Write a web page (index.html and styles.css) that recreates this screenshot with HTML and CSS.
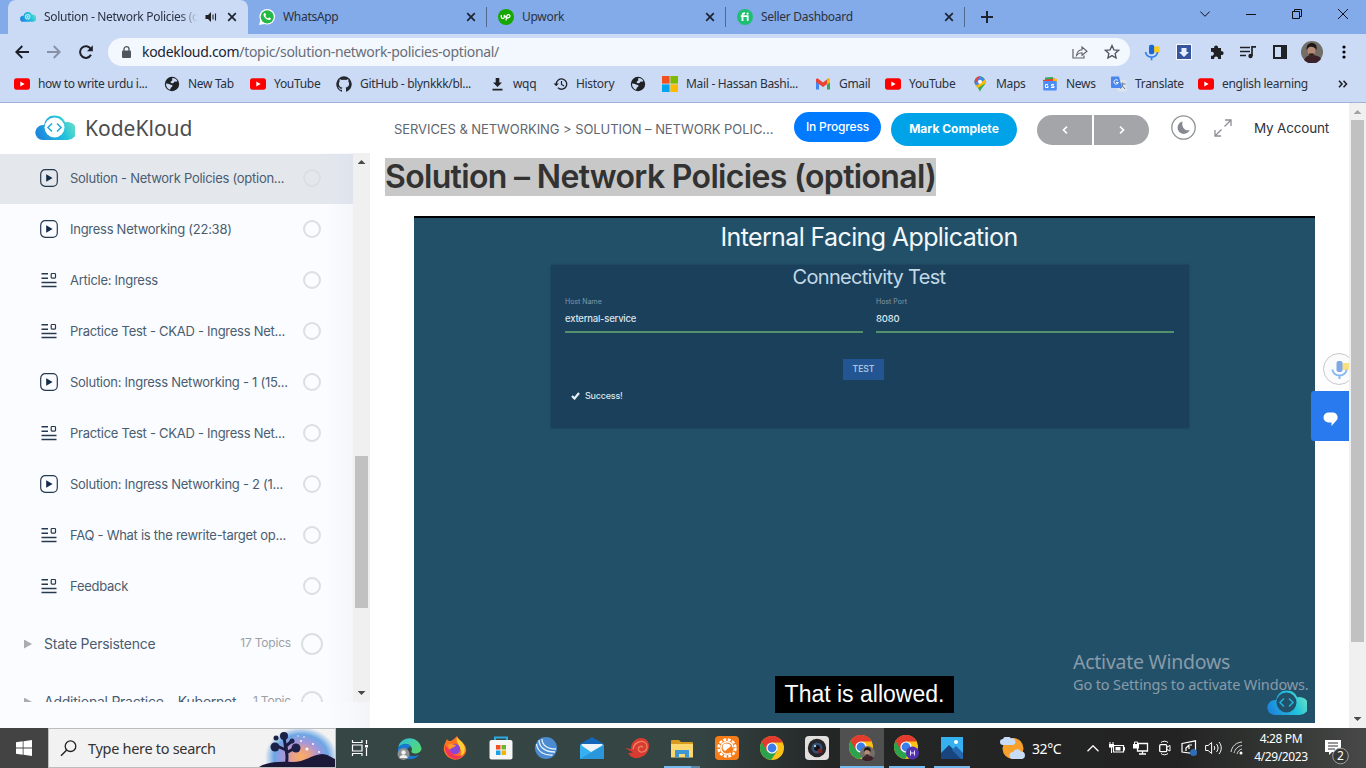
FILE: index.html
```html
<!DOCTYPE html>
<html lang="en">
<head>
<meta charset="utf-8">
<title>Solution - Network Policies (optional)</title>
<link rel="stylesheet" href="styles.css">
</head>
<body>
<svg class="defs" width="0" height="0">
  <defs>
    <linearGradient id="kk" x1="0" y1=".6" x2="1" y2=".3"><stop offset="0" stop-color="#1d86dc"/><stop offset=".6" stop-color="#22c3dc"/><stop offset="1" stop-color="#6fe3c4"/></linearGradient>
    <linearGradient id="edge" x1="0" y1="0" x2="1" y2="1"><stop offset="0" stop-color="#2bb7e8"/><stop offset=".45" stop-color="#45d0a0"/><stop offset="1" stop-color="#5bd86a"/></linearGradient>
    <symbol id="i-close" viewBox="0 0 10 10"><path d="M1.2 1.2l7.6 7.6M8.8 1.2L1.2 8.8" stroke="#1d2430" stroke-width="1.7"/></symbol>
    <symbol id="i-yt" viewBox="0 0 16 16"><rect y="2.3" width="16" height="11.4" rx="2.6" fill="#f00"/><path d="M6.3 5.6v4.8L10.6 8z" fill="#fff"/></symbol>
    <symbol id="i-globe" viewBox="0 0 16 16"><circle cx="8" cy="8" r="7.200" fill="#202124"/><path d="M2 7.500c1.500 0 3 .3 4.200 1 .8.500 2.300.3 2.300 1.500 0 1-1.500 1-1.800 2-.2.700-.2 1.500-1 1.700C3.300 12.700 1.800 10 2 7.500zM8.500 2.100c2.300 0 4 1.300 4.900 3-.8.800-1.600.6-2.400.5-1-.1-.8 1.600-2 1.600-1.300 0-2.500-.2-2.400-1.300.100-1 1.600-.7 1.700-1.700 0-.8-.5-1.500.2-2.100z" fill="#cbdbf5"/></symbol>
    <symbol id="i-chrome" viewBox="0 0 24 24"><circle cx="12" cy="12" r="12" fill="#fbc116"/><path d="M12 12L1.600 6A12 12 0 0 0 11 23.950L17.200 15z" fill="#2ba24c"/><path d="M12 12V6.500h10.700A12 12 0 0 0 1.600 6l5.200 9z" fill="#e33b2e"/><circle cx="12" cy="12" r="5.600" fill="#fff"/><circle cx="12" cy="12" r="4.400" fill="#3b7de9"/></symbol>
    <symbol id="i-kk" viewBox="0 0 40 25"><path d="M8 24.500a7.500 7.500 0 1 1 1-14.900 11 11 0 0 1 21.200-2.800A9 9 0 1 1 32 24.500z" fill="url(#kk)"/></symbol>
    <symbol id="i-play" viewBox="0 0 18 18"><rect x=".7" y=".7" width="16.600" height="16.600" rx="4.500" fill="none" stroke="#26394f" stroke-width="1.200"/><path d="M6.200 5.200v7.600L12.600 9z" fill="#142c47"/></symbol>
    <symbol id="i-article" viewBox="0 0 16 16"><path d="M.5 1.800H7M.5 6.200H7M.5 10.500h15M.5 14.500h15" stroke="#26394f" stroke-width="1.400"/><rect x="10.200" y="1.500" width="4.300" height="4.600" rx=".8" fill="none" stroke="#26394f" stroke-width="1.200"/></symbol>
    <symbol id="i-mic" viewBox="0 0 18 20"><rect x="11" y="3" width="7" height="7" rx="1" fill="#fbcb1e"/><rect x="5.500" y="1" width="6" height="11" rx="2" fill="#1a66d6"/><path d="M1.500 9.500a7 6 0 0 0 14 0M8.500 15v4" fill="none" stroke="#2f83ea" stroke-width="2"/></symbol>
    <symbol id="i-face" viewBox="0 0 22 22"><circle cx="11" cy="11" r="11" fill="#746e69"/><path d="M3 19c2-4 5-5 8-5s8 1 9 4a11 11 0 0 1-17 1z" fill="#3b2229"/><ellipse cx="10.500" cy="10" rx="3.800" ry="5.500" fill="#b58b75"/><path d="M5.500 9c0-5 2-7 5.500-7s5.500 3 4.500 7c-2-4-7-4-8.500-2z" fill="#1c1718"/><path d="M7.500 13c2-1 4-1 6 0-1 4-5 4-6 0z" fill="#33241f"/></symbol>
  </defs>
</svg>

<div class="screen">
  <header class="browser">
    <div class="tabstrip">
      <div class="tab tab-active">
        <svg class="i16" viewBox="0 0 40 25"><use href="#i-kk"/><circle cx="19" cy="12" r="7" fill="#bfeaf5"/><circle cx="19" cy="12" r="3.500" fill="none" stroke="#22b3e0" stroke-width="2"/></svg>
        <span class="tab-title fade">Solution - Network Policies (o</span>
        <svg class="sound" width="12" height="12" viewBox="0 0 12 12"><path d="M.5 4v4h2.500l3 3V1L3 4z" fill="#202124"/><path d="M8 3.500v5M10.500 2.500v7" stroke="#202124" stroke-width="1.100"/></svg>
        <svg class="x" width="10" height="10"><use href="#i-close"/></svg>
      </div>
      <div class="tab">
        <svg class="i16" viewBox="0 0 16 16"><circle cx="8.200" cy="7.800" r="7.800" fill="#fff"/><path d="M0 16l1.500-5 4 4z" fill="#fff"/><circle cx="8.200" cy="7.800" r="6.600" fill="#25b846"/><path d="M5 4.300c1-1 1.700.3 2 1.300L6.400 7c.6 1.200 1.400 1.900 2.600 2.500l1.200-1c1.200.4 2.300 1 1.300 2-2.600 2.200-8.700-3-6.500-6.200z" fill="#fff"/></svg>
        <span class="tab-title">WhatsApp</span>
        <svg class="x" width="10" height="10"><use href="#i-close"/></svg>
      </div>
      <div class="tab divided">
        <svg class="i16" viewBox="0 0 16 16"><circle cx="8" cy="8" r="8" fill="#14a800"/><path d="M3.300 6v2c0 2 3 2 3 0V6c.8 1.500 1.500 3 3 3s2.700-.8 2.700-2-2.500-2.500-3.200 0L8 11.500" fill="none" stroke="#fff" stroke-width="1.300"/></svg>
        <span class="tab-title">Upwork</span>
        <svg class="x" width="10" height="10"><use href="#i-close"/></svg>
      </div>
      <div class="tab divided">
        <svg class="i16" viewBox="0 0 16 16"><circle cx="8" cy="8" r="8" fill="#1dbf73"/><path d="M5.500 12V6c0-1.500 1-1.900 2.500-1.700M3.800 7.200h6.900V12" fill="none" stroke="#fff" stroke-width="1.800"/><circle cx="10.600" cy="4.600" r="1.100" fill="#fff"/></svg>
        <span class="tab-title">Seller Dashboard</span>
        <svg class="x" width="10" height="10"><use href="#i-close"/></svg>
      </div>
      <div class="newtab divided"><svg width="14" height="14" viewBox="0 0 14 14"><path d="M7 1v12M1 7h12" stroke="#1d2430" stroke-width="2"/></svg></div>
      <div class="wincontrols">
        <svg width="10" height="10" viewBox="0 0 10 10"><path d="M.3 2.500L5 7.300l4.700-4.800" fill="none" stroke="#111" stroke-width="1"/></svg>
        <svg width="10" height="10" viewBox="0 0 10 10"><path d="M0 5.500h10" stroke="#111"/></svg>
        <svg width="10" height="10" viewBox="0 0 10 10"><path d="M.5 2.500h7v7h-7zM2.500 2.500v-2h7v7h-2" fill="none" stroke="#111"/></svg>
        <svg width="10" height="10" viewBox="0 0 10 10"><path d="M0 0l10 10M10 0L0 10" stroke="#111"/></svg>
      </div>
    </div>

    <div class="toolbar">
      <svg width="14" height="14" viewBox="0 0 14 14"><path d="M14 7H1.500M7.300 1L1.300 7l6 6" fill="none" stroke="#1d2027" stroke-width="1.900"/></svg>
      <svg width="14" height="14" viewBox="0 0 14 14"><path d="M0 7h12.500M6.700 1l6 6-6 6" fill="none" stroke="#8691a6" stroke-width="1.900"/></svg>
      <svg width="14" height="14" viewBox="0 0 14 14"><path d="M12 9.800A5.800 5.800 0 1 1 11.800 4" fill="none" stroke="#1d2027" stroke-width="2"/><path d="M13.800.3v6H8z" fill="#1d2027"/></svg>
      <div class="omnibox">
        <svg width="9" height="12" viewBox="0 0 9 12"><rect y="4.500" width="9" height="7.500" rx="1" fill="#50555c"/><path d="M2 5V3a2.500 2.300 0 0 1 5 0v2" fill="none" stroke="#50555c" stroke-width="1.300"/></svg>
        <span class="url"><b>kodekloud.com</b>/topic/solution-network-policies-optional/</span>
        <svg width="16" height="14" viewBox="0 0 16 14"><path d="M1 4v9h11v-2.500" fill="none" stroke="#5f6368" stroke-width="1.200"/><path d="M4.500 10.500C5 6.500 7.500 5 10 4.800V2l5 4.300-5 4V7.800c-2.500 0-4 .8-5.500 2.700z" fill="none" stroke="#5f6368" stroke-width="1.100"/></svg>
        <svg width="16" height="16" viewBox="0 0 16 16"><path d="M8 1.500l1.900 4.300 4.700.5-3.500 3.100 1 4.600L8 11.600 3.900 14l1-4.600L1.400 6.300l4.700-.5z" fill="none" stroke="#50555c" stroke-width="1.300"/></svg>
      </div>
      <svg width="16" height="17"><use href="#i-mic"/></svg>
      <svg width="16" height="16" viewBox="0 0 16 16"><rect width="16" height="16" fill="#f6f9ff"/><rect x="1" y="1" width="14" height="14" fill="#37559c"/><path d="M5.500 4h5v4H13l-5 5-5-5h2.500z" fill="#e6efff"/></svg>
      <svg width="16" height="16" viewBox="0 0 16 16"><path d="M2 4h3.200a2 2 0 1 1 3.800 0h3v3.200a2 2 0 1 1 0 3.800V15H9a2 2 0 1 0-3.800 0H2v-3.500a2 2 0 1 0 0-3.600z" fill="#202124"/></svg>
      <svg width="16" height="16" viewBox="0 0 16 16"><path d="M0 3.500h10M0 7.500h10M0 11.500h6" stroke="#202124" stroke-width="1.700"/><circle cx="10.500" cy="12" r="2.200" fill="#202124"/><path d="M12 12V2.800h4" fill="none" stroke="#202124" stroke-width="1.700"/></svg>
      <svg width="14" height="14" viewBox="0 0 14 14"><rect x="1" y="1" width="12" height="12" fill="none" stroke="#202124" stroke-width="2"/><path d="M8 1h5v12H8z" fill="#202124"/></svg>
      <svg width="22" height="22"><use href="#i-face"/></svg>
      <svg width="4" height="14" viewBox="0 0 4 14"><circle cx="2" cy="2" r="1.600"/><circle cx="2" cy="7" r="1.600"/><circle cx="2" cy="12" r="1.600"/></svg>
    </div>

    <nav class="bookmarks">
      <a><svg class="i16"><use href="#i-yt"/></svg><span>how to write urdu i...</span></a>
      <a><svg class="i16"><use href="#i-globe"/></svg><span>New Tab</span></a>
      <a><svg class="i16"><use href="#i-yt"/></svg><span>YouTube</span></a>
      <a><svg class="i16" viewBox="0 0 16 16"><path d="M8 .2a8 8 0 0 0-2.500 15.500c.4.100.5-.2.500-.4v-1.500c-2.200.5-2.700-1-2.700-1-.4-.9-.9-1.200-.9-1.200-.7-.5.1-.5.1-.5.800.1 1.200.8 1.200.8.700 1.200 1.900.9 2.300.7.100-.5.300-.9.500-1.100-1.800-.2-3.600-.9-3.600-4 0-.9.300-1.600.8-2.100-.1-.2-.4-1 .1-2.100 0 0 .7-.2 2.200.8a7.700 7.700 0 0 1 4 0c1.500-1 2.200-.8 2.200-.8.500 1.100.2 1.900.1 2.100.5.500.8 1.200.8 2.100 0 3.100-1.900 3.800-3.600 4 .3.300.5.800.5 1.500v2.300c0 .2.100.5.500.4A8 8 0 0 0 8 .2z" fill="#24292f"/></svg><span>GitHub - blynkkk/bl...</span></a>
      <a class="narrow"><svg width="11" height="13" viewBox="0 0 11 13"><path d="M3.700 0h3.600v4.500H10L5.500 9 1 4.500h2.700zM.5 10.800h10v1.800H.5z" fill="#202124"/></svg><span>wqq</span></a>
      <a><svg width="15" height="14" viewBox="0 0 15 14"><path d="M3.300 7a5.200 5.200 0 1 1 1.600 3.800" fill="none" stroke="#202124" stroke-width="1.300"/><path d="M.6 6.500h5.200L3.200 9.300z" fill="#202124"/><path d="M8.500 4v3.500l2.500 1.400" fill="none" stroke="#202124" stroke-width="1.200"/></svg><span>History</span></a>
      <a><svg class="i16"><use href="#i-globe"/></svg></a>
      <a><svg class="i16" viewBox="0 0 16 16"><path d="M0 0h7.600v7.600H0z" fill="#f25022"/><path d="M8.400 0H16v7.600H8.400z" fill="#7fba00"/><path d="M0 8.400h7.600V16H0z" fill="#00a4ef"/><path d="M8.400 8.400H16V16H8.400z" fill="#ffb900"/></svg><span>Mail - Hassan Bashi...</span></a>
      <a><svg class="i16" viewBox="0 0 16 16"><path d="M1 4h3v9.500H1z" fill="#4285f4"/><path d="M12 4h3v9.500h-3z" fill="#34a853"/><path d="M1 3l1.500-.8L8 6.500l5.500-4.300L15 4v2L8 11 1 6z" fill="#ea4335"/><path d="M12 4l2-2 1 1.500V6.500l-3 2z" fill="#fbbc04"/></svg><span>Gmail</span></a>
      <a><svg class="i16"><use href="#i-yt"/></svg><span>YouTube</span></a>
      <a><svg class="i16" viewBox="0 0 16 16"><path d="M8 .3A5.500 5.500 0 0 0 2.500 5.800C2.500 10 6 10.500 8 15.800c2-5.300 5.500-5.800 5.500-10A5.500 5.500 0 0 0 8 .3z" fill="#34a853"/><path d="M3.500 9L12.600 3a6 6 0 0 1 .5 4.500L6 12c-1-1.200-2-2-2.500-3z" fill="#fbbc04"/><path d="M13 3.500L5 9.500 2.700 7a5.500 5.500 0 0 1 1-4.500L8 .3z" fill="#4285f4"/><path d="M3.800 2.300A5.500 5.500 0 0 1 8 .3L3 8a6 6 0 0 1 .8-5.700z" fill="#ea4335"/><circle cx="8" cy="5.700" r="2" fill="#fff"/></svg><span>Maps</span></a>
      <a><svg class="i16" viewBox="0 0 16 16"><path d="M3 1.500l8-.5.500 4H3z" fill="#34a853"/><path d="M1 4l12-1.500 2 3H1z" fill="#ea4335"/><path d="M11 3h4v3h-4z" fill="#fbbc04"/><rect x="1.200" y="5" width="13.600" height="9.500" rx="1" fill="#4e8df5"/><path d="M6 8.500H3.500v3H6V10H5M12 8.500H9.500V10H12v1.500H9" fill="none" stroke="#fff"/></svg><span>News</span></a>
      <a><svg class="i16" viewBox="0 0 16 16"><rect x="6.500" y="4" width="9" height="11.500" rx="1" fill="#dfe3ea"/><path d="M9 8h5.500M11.700 6.500V8c0 2-1 3.500-2.700 4.500M10.500 9l3.500 4" fill="none" stroke="#607d9b"/><path d="M1 .5h7L11 12H1a1 1 0 0 1-1-1V1.500a1 1 0 0 1 1-1z" fill="#4a86ee"/><path d="M7 4.700A2.200 2.200 0 1 0 7.300 6.500H5" fill="none" stroke="#fff"/></svg><span>Translate</span></a>
      <a><svg class="i16"><use href="#i-yt"/></svg><span>english learning</span></a>
      <a><svg width="10" height="8" viewBox="0 0 10 8"><path d="M1 .8L4 4 1 7.200M5.500.8l3 3.200-3 3.200" fill="none" stroke="#202124" stroke-width="1.600"/></svg></a>
    </nav>
  </header>

  <main class="page">
    <aside class="sidebar">
      <div class="brand">
        <svg width="40" height="26" viewBox="0 0 40 25"><use href="#i-kk"/><circle cx="19.500" cy="12" r="10" fill="#fff"/><path d="M17 8l-4 4 4 4M22 8l4 4-4 4" fill="none" stroke="#27a9d8" stroke-width="1.600"/></svg>
        <span>KodeKloud</span>
      </div>
      <div class="course">
        <div class="lessons">
          <a class="lesson current"><svg class="i18"><use href="#i-play"/></svg><span>Solution - Network Policies (option...</span><i class="ring"></i></a>
          <a class="lesson"><svg class="i18"><use href="#i-play"/></svg><span>Ingress Networking (22:38)</span><i class="ring"></i></a>
          <a class="lesson"><svg class="i18 art"><use href="#i-article"/></svg><span>Article: Ingress</span><i class="ring"></i></a>
          <a class="lesson"><svg class="i18 art"><use href="#i-article"/></svg><span>Practice Test - CKAD - Ingress Net...</span><i class="ring"></i></a>
          <a class="lesson"><svg class="i18"><use href="#i-play"/></svg><span>Solution: Ingress Networking - 1 (15...</span><i class="ring"></i></a>
          <a class="lesson"><svg class="i18 art"><use href="#i-article"/></svg><span>Practice Test - CKAD - Ingress Net...</span><i class="ring"></i></a>
          <a class="lesson"><svg class="i18"><use href="#i-play"/></svg><span>Solution: Ingress Networking - 2 (1...</span><i class="ring"></i></a>
          <a class="lesson"><svg class="i18 art"><use href="#i-article"/></svg><span>FAQ - What is the rewrite-target op...</span><i class="ring"></i></a>
          <a class="lesson"><svg class="i18 art"><use href="#i-article"/></svg><span>Feedback</span><i class="ring"></i></a>
          <a class="module"><i class="tri"></i><span>State Persistence</span><small>17 Topics</small><i class="ring big"></i></a>
          <a class="module"><i class="tri"></i><span>Additional Practice – Kubernet</span><small>1 Topic</small><i class="ring big"></i></a>
        </div>
        <div class="scrollbar side-scroll"><i class="arrow up"></i><i class="thumb"></i><i class="arrow down"></i></div>
      </div>
    </aside>

    <section class="content">
      <div class="topbar">
        <span class="crumbs">SERVICES &amp; NETWORKING &gt; SOLUTION – NETWORK POLIC...</span>
        <span class="status">In Progress</span>
        <span class="complete">Mark Complete</span>
        <span class="pager">
          <i><svg width="6" height="8" viewBox="0 0 6 8"><path d="M5 .7L1.500 4 5 7.300" fill="none" stroke="#fff" stroke-width="1.600"/></svg></i>
          <i><svg width="6" height="8" viewBox="0 0 6 8"><path d="M1 .7L4.500 4 1 7.300" fill="none" stroke="#fff" stroke-width="1.600"/></svg></i>
        </span>
        <svg class="moon" width="25" height="25" viewBox="0 0 25 25"><circle cx="12.500" cy="12.500" r="11.700" fill="none" stroke="#8e9196" stroke-width="1.300"/><path d="M11.500 6.500a6.300 6.300 0 1 0 7.200 8.500c-4 1.500-8.500-2-7.200-8.500z" fill="#85898f"/></svg>
        <svg class="expand" width="18" height="18" viewBox="0 0 18 18"><path d="M10.500 7.500L17 1M11 1h6v6M7.500 10.500L1 17M1 11v6h6" fill="none" stroke="#8c8f94" stroke-width="1.300"/></svg>
        <span class="account">My Account</span>
      </div>
      <h1><span>Solution – Network Policies (optional)</span></h1>
      <div class="video">
        <h2>Internal Facing Application</h2>
        <div class="panel">
          <h3>Connectivity Test</h3>
          <div class="fields">
            <div class="field"><label>Host Name</label><p>external-service</p></div>
            <div class="field"><label>Host Port</label><p>8080</p></div>
          </div>
          <span class="test">TEST</span>
          <p class="success"><svg width="9" height="8" viewBox="0 0 9 8"><path d="M1 4l2.500 2.500L8 1" fill="none" stroke="#e8f0f4" stroke-width="2.200"/></svg>Success!</p>
        </div>
        <span class="caption">That is allowed.</span>
        <svg class="badge" width="40" height="26" viewBox="0 0 40 25"><use href="#i-kk"/><circle cx="19.500" cy="12" r="10" fill="#225069"/><path d="M17 8l-4 4 4 4M22 8l4 4-4 4" fill="none" stroke="#27b1d8" stroke-width="1.600"/></svg>
        <div class="watermark"><strong>Activate Windows</strong><span>Go to Settings to activate Windows.</span></div>
      </div>
    </section>
    <div class="float-mic"><svg width="18" height="22" viewBox="0 0 18 20"><use href="#i-mic"/></svg></div>
    <div class="float-chat"><svg width="16" height="15" viewBox="0 0 16 15"><path d="M5.500.5h5a5 5 0 0 1 2 9L8.500 14V10.500h-3a5 5 0 0 1 0-10z" fill="#fff"/></svg></div>
    <div class="scrollbar page-scroll"><i class="arrow up"></i><i class="thumb"></i><i class="arrow down"></i></div>
  </main>

  <footer class="taskbar">
    <div class="start"><svg width="16" height="16" viewBox="0 0 16 16"><path d="M0 2.300l6.700-1v6.300H0zM7.500 1.200L16 0v7.600H7.500zM0 8.400h6.700v6.300l-6.700-1zM7.500 8.400H16V16l-8.500-1.200z" fill="#fff"/></svg></div>
    <div class="search">
      <svg width="17" height="17" viewBox="0 0 17 17"><circle cx="10.500" cy="6.200" r="5.300" fill="none" stroke="#222" stroke-width="1.300"/><path d="M6.700 10L1 15.800" stroke="#222" stroke-width="1.400"/></svg>
      <span>Type here to search</span>
      <div class="scene"><svg width="76" height="38" viewBox="0 0 76 38"><path d="M0 38c8-5 20-6 33-5 14 0 18-7 30-8 6 0 10 4 13 5v8z" fill="#1c1838"/><path d="M27 36c2-8 1-11 0-15l-9-4M27 22l-2-14M27 24l9-5M28 25l-1-8 6-5" fill="none" stroke="#1c1c42" stroke-width="3"/><g fill="#1b2149"><circle cx="16" cy="18" r="4.500"/><circle cx="25" cy="7" r="4"/><circle cx="17" cy="9" r="2.500"/><circle cx="33" cy="12" r="2.500"/><circle cx="37" cy="19" r="4.500"/></g><g fill="#fff"><circle cx="42" cy="12" r="1"/><circle cx="48" cy="20" r="1.500"/><circle cx="45" cy="8" r=".8"/><circle cx="54" cy="15" r="1"/><circle cx="60" cy="23" r=".9"/><circle cx="39" cy="7" r=".7"/></g></svg></div>
    </div>
    <div class="apps">
      <div class="taskview"><svg width="18" height="16" viewBox="0 0 18 16"><path d="M1.500 0v2.500h9.500V0M1.500 16v-2.500h9.500V16M1.500 5h9.500v6H1.500zM15.500 0v4M15.500 8v8" fill="none" stroke="#fff" stroke-width="1.200"/><path d="M14 5h3v2.500h-3z" fill="#fff"/></svg></div>
      <div><svg width="25" height="24" viewBox="0 0 25 24"><path d="M1 11A12 11.500 0 0 1 24.500 12c0 4-3.500 5.500-6.500 5.500-2.500 0-4-1-3.500-2.500 2-4-3-8-7-6C4.500 9 2 10 1 11z" fill="url(#edge)"/><path d="M1 12c2-5 12-6 13-1-3 0-5 3-4 6s6 4 12 2c-3 4-8 5-12 4C4 22 0 17 1 12z" fill="#1879ce"/><circle cx="6.500" cy="18" r="6" fill="#8c9092"/><circle cx="6.500" cy="16.500" r="2.200" fill="#f2f2f2"/><path d="M2.500 22c0-4 8-4 8 0z" fill="#f2f2f2"/></svg></div>
      <div><svg width="24" height="24" viewBox="0 0 24 24"><path d="M4 3c1 2 2 2 4 2 2-1 4-3 6-5 1 3 3 4 5 6 3 3 5 6 4 10a11.500 11.500 0 0 1-22-1C0 11 2 7 4 3z" fill="#ff7420"/><path d="M14 1c2 3 5 4 7 8 2 5 0 10-4 12 3-6 0-8-1-11-1-3-3-5-2-9z" fill="#ffcf33"/><path d="M2 9c-1 6 3 13 10 14 4 0 7-2 8-4-4 2-9 1-11-2z" fill="#f3335c"/><circle cx="12" cy="13" r="5.200" fill="#8b45d8"/><path d="M5 9c3-2 5 0 8 0-1 3-5 2-5 4-2 0-3-2-3-4z" fill="#ff9a2a"/></svg></div>
      <div><svg width="24" height="24" viewBox="0 0 24 24"><path d="M6 6V1.500h12V6" fill="none" stroke="#2daae1" stroke-width="2"/><rect x=".5" y="4" width="23" height="19.500" rx="2" fill="#f6f6f6"/><path d="M7 9h4.500v4.500H7z" fill="#f25022"/><path d="M12.500 9H17v4.500h-4.500z" fill="#6fb52c"/><path d="M7 14.500h4.500V19H7z" fill="#1aa0e8"/><path d="M12.500 14.500H17V19h-4.500z" fill="#f5b400"/></svg></div>
      <div><svg width="22" height="22" viewBox="0 0 22 22"><circle cx="11" cy="11" r="11" fill="#4b8bd2"/><path d="M4 3c0 7 6 12 16 12M7 2c0 6 5 10 14 10M1.500 7c1 8 8 11.500 16 11" fill="none" stroke="#e7f2fb" stroke-width="1.300"/></svg></div>
      <div><svg width="24" height="22" viewBox="0 0 24 22"><path d="M0 7l12-7 12 7v5H0z" fill="#1467b8"/><path d="M1.500 7h21v8l-10 5-11-5z" fill="#eef5fa"/><path d="M0 7.500l11 7.500 13-7.500V22H0z" fill="#36b0f0"/><path d="M0 22l24-14v14z" fill="#2a97dc"/></svg></div>
      <div><svg width="24" height="20" viewBox="0 0 24 20"><path d="M0 10l6 1c0-7 5-11 10-11 5 0 8 3 8 8 0 7-6 12-12 12-5 0-7-2-9-5l5-.5z" fill="#d93a32"/><path d="M8 11c2-9 13-10 14-3 .5 6-7 8-8.500 4-.8-3 3-5 4.500-2.500" fill="none" stroke="#ee8260" stroke-width="1.300"/></svg></div>
      <div class="open-part"><svg width="22" height="19" viewBox="0 0 22 19"><path d="M0 2a1 1 0 0 1 1-1h7l2 2h11a1 1 0 0 1 1 1v14H0z" fill="#d89b1f"/><path d="M0 5h22v13.500H0z" fill="#fbd870"/><path d="M4 18.500V11h14v7.500h-4V15H8v3.500z" fill="#3e97d5"/></svg></div>
      <div><svg width="24" height="24" viewBox="0 0 24 24"><rect width="24" height="24" rx="4" fill="#f77b16"/><circle cx="12" cy="12" r="8.500" fill="none" stroke="#fff" stroke-width="2.500" stroke-dasharray="3 1.500"/><circle cx="12" cy="12" r="7" fill="#fff"/><circle cx="12" cy="12" r="5.500" fill="#f48120"/><path d="M8 9c2-2 6-2 8 1l-6 5c-2-1-3-3-2-6z" fill="#fff"/><path d="M12 14l7-3-2 7z" fill="#f77b16"/></svg></div>
      <div><svg width="24" height="24"><use href="#i-chrome"/></svg></div>
      <div><svg width="24" height="24" viewBox="0 0 24 24"><rect width="24" height="24" rx="4" fill="#e2e0df"/><circle cx="12" cy="12" r="9.200" fill="#272427"/><circle cx="12" cy="12" r="5.500" fill="#31517c"/><circle cx="12" cy="12" r="3" fill="#131317"/><circle cx="15" cy="15" r="2.500" fill="#7b2527"/><circle cx="10" cy="10" r="1.200" fill="#a7d4dd"/></svg></div>
      <div class="open focused"><svg width="26" height="26" viewBox="0 0 26 26"><svg width="24" height="24"><use href="#i-chrome"/></svg><svg x="11" y="11" width="15" height="15"><use href="#i-face"/></svg></svg></div>
      <div class="open"><svg width="26" height="26" viewBox="0 0 26 26"><svg width="24" height="24"><use href="#i-chrome"/></svg><circle cx="18.500" cy="18" r="6.500" fill="#5331ae"/><path d="M16.500 15.500v5M20.500 15.500v5M16.500 18h4" stroke="#e9e0ff"/></svg></div>
      <div class="open"><svg width="22" height="22" viewBox="0 0 22 22"><path d="M0 0h22v22H0z" fill="#35b1f0"/><path d="M0 16L8 8l14 14H0z" fill="#18457e"/><path d="M11 13l4-4 7 7v6h-2z" fill="#2668ae"/><circle cx="15" cy="5" r="2" fill="#fff"/></svg></div>
    </div>
    <div class="weather"><svg width="25" height="23" viewBox="0 0 25 23"><circle cx="13" cy="11.500" r="10.500" fill="#f7a02c"/><path d="M3 8a3 3 0 0 1 0-6 4.500 4.500 0 0 1 8-.5 3.300 3.300 0 0 1 2 6.500zM13 22a3.500 3.500 0 0 1 0-7 4.500 4.500 0 0 1 8-.5 3.800 3.800 0 0 1 1 7.500z" fill="#c9dcf7"/></svg><span>32°C</span></div>
    <div class="tray">
      <svg width="12" height="7" viewBox="0 0 12 7"><path d="M.5 6.300L6 .8l5.500 5.500" fill="none" stroke="#fff" stroke-width="1.300"/></svg>
      <svg width="16" height="12" viewBox="0 0 16 12"><path d="M4.500 3.500h10v6.500h-10z" fill="none" stroke="#fff" stroke-width="1.200"/><path d="M6.500 5h5v3.500h-5zM15 5h1v3.500h-1zM0 2h5v3.500H0z" fill="#fff"/><path d="M1 0v2M4 0v2M2.500 5v6" stroke="#fff"/></svg>
      <svg width="16" height="14" viewBox="0 0 16 14"><path d="M5 2.500h9.500V10H4.500V6M9.500 10v3M6 13h7" fill="none" stroke="#fff" stroke-width="1.300"/><path d="M0 3h6v4.500H0z" fill="#fff"/><path d="M1.500 3V1h3v2" fill="none" stroke="#fff"/></svg>
      <svg width="12" height="16" viewBox="0 0 12 16"><rect x=".7" y="4.700" width="7" height="7" rx="1" fill="none" stroke="#fff" stroke-width="1.300"/><path d="M8 7l3-1.500v5.500L8 9.500M2 2.500C4 .8 7 .8 9 2.500M2 13.500c2 1.700 5 1.700 7 0" fill="none" stroke="#fff"/></svg>
      <svg width="16" height="16" viewBox="0 0 16 16"><path d="M1 3.500L14.500.8v13L1 12zM5 11V8l3-3h3M8 9V6" fill="none" stroke="#fff" stroke-width="1.200"/><circle cx="12.500" cy="12.500" r="3.500" fill="#2f6db8"/></svg>
      <svg width="17" height="14" viewBox="0 0 17 14"><path d="M.6 4.500v5h2.500l3.500 3V1.500l-3.500 3zM9 5c1 1.200 1 2.800 0 4M11.500 3c2 2.500 2 5.500 0 8M14 1c3 3.500 3 8.500 0 12" fill="none" stroke="#fff"/></svg>
      <svg width="14" height="14" viewBox="0 0 14 14"><path d="M1 11C2 5 6 1.500 12 1M4 12c1-4 4-7 8-7.500M7 13c.5-2.500 2.500-4.500 5-5" fill="none" stroke="#d8d8d8"/><circle cx="11" cy="12" r="1.500" fill="#fff"/></svg>
      <div class="clock"><span>4:28 PM</span><span>4/29/2023</span></div>
      <svg class="notes" width="24" height="25" viewBox="0 0 24 25"><path d="M0 0h16v12H7l-3 3v-3H0z" fill="#fff"/><path d="M3 3h10M3 6h10M3 9h7" stroke="#333"/><circle cx="15.500" cy="16" r="7.800" fill="#373737" stroke="#a0a0a0"/><text class="count" x="15.500" y="20" text-anchor="middle">2</text></svg>
    </div>
  </footer>
</div>
</body>
</html>
```

FILE: styles.css
```css
* { box-sizing: border-box; }
html, body { margin: 0; height: 100%; overflow: hidden; }
body { font-family: Inter, "Liberation Sans", sans-serif; background: #fff; }
h1, h2, h3, p { margin: 0; font-weight: 400; }
svg { display: block; flex: none; }
i { font-style: normal; }
.defs { position: absolute; }
.screen { width: 1366px; height: 768px; display: grid; grid-template-rows: 103px 625px 40px; overflow: hidden; }

/* Browser chrome */
.browser { display: grid; grid-template-rows: 34px 36px 33px; background: #cbdbf5; border-bottom: 1px solid #9fb2d6; height: 103px; font-family: "Noto Sans", sans-serif; font-size: 12px; color: #2a3140; }
.i16 { width: 16px; height: 16px; }
.tabstrip { display: grid; grid-template-columns: 240px 238px 239px 239px 80px 1fr; padding-left: 8px; background: #84abe9; }
.tab { display: flex; align-items: center; padding: 0 10px 0 12px; min-width: 0; }
.tab-title { flex: 1; margin-left: 8px; padding-bottom: 1px; white-space: nowrap; overflow: hidden; letter-spacing: -.3px; }
.tab-active { background: #cbdbf5; border-radius: 8px 8px 0 0; padding-right: 11px; }
.fade { -webkit-mask-image: linear-gradient(90deg, #000 88%, transparent 100%); mask-image: linear-gradient(90deg, #000 88%, transparent 100%); }
.sound { margin: 0 10px 0 7px; }
.divided { background: linear-gradient(#52688f, #52688f) 0 7px / 1px 20px no-repeat; }
.newtab { display: flex; align-items: center; padding-left: 16px; }
.tabstrip > .tab:nth-child(2) { padding-left: 11px; }
.wincontrols { display: flex; justify-content: flex-end; gap: 36px; padding: 9px 18px 0 0; }
.toolbar { display: grid; grid-template-columns: 32px 32px 29px 1036px 32px 33px 31px 33px 28px 41px 8px; padding-left: 15px; align-items: center; }
.omnibox { width: 1022px; height: 28px; border-radius: 14px; background: #f3f7fe; display: flex; align-items: center; padding: 0 10px 0 14px; }
.url { flex: 1; margin-left: 11px; padding-bottom: 1px; font-size: 14px; color: #686e77; letter-spacing: -.31px; }
.url b { font-weight: 400; color: #202430; }
.omnibox svg:last-child { margin-left: 16px; }
.bookmarks { display: grid; grid-template-columns: 150px 86px 86px 156px 61px 77px 32px 153px 70px 87px 70px 69px 87px 140px 16px; padding: 0 0 5px 14px; }
.bookmarks a { display: flex; align-items: center; gap: 8px; white-space: nowrap; letter-spacing: -.31px; min-width: 0; }
.bookmarks span { padding-bottom: 1px; }
.bookmarks .narrow { gap: 10px; }

/* Page */
.page { display: grid; grid-template-columns: 370px 979px 17px; position: relative; background: #fff; min-height: 0; }
.sidebar { display: grid; grid-template-rows: 50px 549px; background: linear-gradient(90deg, #fafcff 88%, #f3f5f9); }
.brand { display: flex; align-items: center; padding-left: 35px; gap: 10px; background: #fff; font: 21px "Noto Sans", sans-serif; color: #4b4c4e; }
.course { display: grid; grid-template-columns: 353px 17px; min-height: 0; }
.lessons { overflow: hidden; padding-top: 1px; background: linear-gradient(90deg, #fafcff 92%, #f4f6fa); }
.lesson { display: grid; grid-template-columns: 30px 232px 18px; align-items: center; height: 51px; padding: 0 0 3px 40px; color: #4b5c70; font-size: 13px; letter-spacing: -.27px; white-space: nowrap; }
.lesson span { padding-bottom: 1px; }
.current { background: linear-gradient(90deg, #e4e8ed 90%, #dfe3ed); height: 50px; margin-bottom: 1px; padding-bottom: 2px; }
.i18 { width: 18px; height: 18px; }
.art { padding: 1px; }
.ring { width: 18px; height: 18px; border: 2px solid #dcdfe2; border-radius: 50%; }
.lesson .ring { margin-left: .5px; }
.module { display: grid; grid-template-columns: 20px minmax(0, 1fr) auto 22px; align-items: center; height: 58px; padding: 0 30px 0 24px; font-size: 14px; letter-spacing: -.24px; color: #4b5c70; white-space: nowrap; }
.module span { padding-bottom: 2px; }
.module small { font-size: 12px; color: #9aa0a6; margin-right: 10px; letter-spacing: -.2px; padding-bottom: 3px; }
.big { width: 22px; height: 22px; }
.tri { width: 8px; height: 9px; background: #a9adb2; clip-path: polygon(0 0, 100% 50%, 0 100%); }
.lessons .module:nth-child(10) { margin-top: 2px; }
.scrollbar { background: #f0f0f0; display: flex; flex-direction: column; align-items: center; }
.arrow { width: 8px; height: 4px; background: #4a4a4a; }
.up { clip-path: polygon(50% 0, 100% 100%, 0 100%); margin-top: 7px; }
.down { clip-path: polygon(0 0, 100% 0, 50% 100%); margin: auto 0 7px; }
.thumb { width: 13px; background: #c1c1c1; }
.side-scroll .thumb { height: 152px; margin-top: 292px; }
.page-scroll .up { background: #a3a3a3; }
.page-scroll .thumb { height: 522px; margin-top: 6px; }

.content { min-width: 0; }
.topbar { display: flex; height: 50px; padding-left: 24px; white-space: nowrap; align-items: flex-start; }
.crumbs { width: 400px; font-size: 13px; line-height: 16px; padding-top: 18px; color: #5f6670; letter-spacing: -.07px; }
.status { width: 87px; height: 30px; margin-top: 9px; border-radius: 15px; background: #007bff; color: #fff; font-size: 12px; font-weight: 500; letter-spacing: -.15px; line-height: 30px; text-align: center; }
.complete { width: 126px; height: 33px; margin: 10px 0 0 10px; border-radius: 17px; background: #00a2e8; color: #fff; font-size: 12px; font-weight: 700; line-height: 32px; text-align: center; }
.pager { display: flex; gap: 2px; margin: 12px 0 0 20px; }
.pager i { width: 55px; height: 30px; background: #a3a5a8; display: grid; place-items: center; border-radius: 15px 0 0 15px; }
.pager i + i { border-radius: 0 15px 15px 0; }
.moon { margin: 12px 0 0 22px; }
.expand { margin: 16px 0 0 18px; }
.account { font-size: 13.5px; line-height: 18px; margin: 16px 0 0 22px; color: #2f333a; letter-spacing: -.18px; }
h1 { padding: 5px 0 0 15px; font-size: 32px; line-height: 38px; font-weight: 600; color: #323232; letter-spacing: -.67px; white-space: nowrap; }
h1 span { display: block; width: 551px; height: 38px; background: #c8c8c8; }
.video { position: relative; width: 901px; height: 507px; margin: 20px 0 0 44px; border-top: 2px solid #000; background: #225069; color: #f4f8fa; padding: 2px 0 0 137px; }
h2 { width: 636px; text-align: center; font-size: 25px; line-height: 34px; letter-spacing: -.62px; }
.panel { width: 638px; height: 163px; margin-top: 11px; padding: 0 14px; background: #1a405b; box-shadow: 0 0 2px #183a52; display: flex; flex-direction: column; }
h3 { text-align: center; font-size: 20px; line-height: 24px; margin: 0 2px 1px 0; letter-spacing: -.7px; color: #c3d8e5; }
.fields { display: grid; grid-template-columns: 298px 298px; gap: 13px; }
.field { height: 43px; border-bottom: 2px solid #54906b; padding-top: 8px; margin-bottom: 26px; }
.field label { display: block; font-size: 7px; line-height: 8px; color: #8398a6; }
.field p { font-size: 9.5px; line-height: 13px; margin-top: 6px; color: #dbe7ee; font-weight: 500; letter-spacing: -.22px; }
.test { width: 41px; height: 21px; margin-left: 278px; background: #225591; color: #a9c3dd; font-size: 8.5px; font-weight: 600; line-height: 21px; text-align: center; }
.success { display: flex; gap: 5px; align-items: center; margin: 10px 0 0 6px; font-size: 9px; line-height: 12px; font-weight: 500; letter-spacing: -.22px; color: #d5e3ea; }
.caption { position: absolute; left: 361px; top: 458px; width: 179px; height: 37px; background: #000; color: #fff; font: 23px/37px "Liberation Sans", sans-serif; text-align: center; white-space: nowrap; }
.badge { position: absolute; left: 853px; top: 472px; }
.watermark { position: absolute; left: 659px; top: 430px; font-family: "Noto Sans", sans-serif; color: #899ba8; white-space: nowrap; }
.watermark strong { display: block; font-weight: 400; font-size: 19.500px; line-height: 27px; letter-spacing: -.25px; }
.watermark span { display: block; font-size: 14.500px; line-height: 19px; letter-spacing: -.13px; }
.float-mic { position: absolute; left: 1323px; top: 250px; width: 32px; height: 32px; border: 1px solid #c7c8ca; border-radius: 50%; background: #fbfbfb; padding: 5px 0 0 7px; clip-path: inset(0 6px 0 0); }
.float-mic svg { opacity: .55; }
.float-chat { position: absolute; left: 1311px; top: 288px; width: 38px; height: 50px; background: #2979ef; border-radius: 3px 0 0 3px; display: grid; place-items: center; padding: 6px 0 0 1px; }

/* Taskbar */
.taskbar { display: grid; grid-template-columns: 48px 288px 641px 104px 1fr; background: linear-gradient(90deg, #434343 0, #434343 48px, #354644 336px, #344543 700px, #242525 830px, #232323 1180px, #353936 1290px, #484848 1366px); font-family: "Noto Sans", sans-serif; color: #fff; }
.start { display: grid; place-items: center; }
.search { display: flex; align-items: center; background: #f2f2f2; border: 1px solid #bdbdbd; padding-left: 11px; color: #333; font-size: 14.500px; letter-spacing: -.3px; }
.search span { margin-left: 11px; flex: 1; white-space: nowrap; }
.scene { width: 76px; height: 38px; background: radial-gradient(ellipse 36px 30px at 42px 28px, #f9ae62 0, #e8a08a 25%, #a497dc 50%, #6ca6e4 75%, #f2f2f2 100%); }
.apps { display: grid; grid-template-columns: 50px 46px 46px 45px 46px 45px 45px 45px 45px 45px 45px 45px 45px 45px; }
.apps div { display: grid; place-items: center; }
.apps .taskview { padding-right: 2px; }
.open { background: linear-gradient(#76b9ed, #76b9ed) 50% 100% / 36px 2px no-repeat; }
.focused { background: linear-gradient(#76b9ed, #76b9ed) 1px 100% / 44px 2px no-repeat, linear-gradient(#505050, #505050) 1px 0 / 44px 40px no-repeat; }
.open-part { background: linear-gradient(90deg, #76b9ed 0, #76b9ed 27px, #5b86a8 27px) 5px 100% / 36px 2px no-repeat; }
.weather { display: flex; align-items: center; gap: 7px; padding-left: 23px; font-size: 14px; letter-spacing: -.4px; }
.tray { display: grid; grid-template-columns: 24px 24px 24px 24px 24px 24px 24px 64px 1fr; align-items: center; justify-items: center; }
.clock { display: flex; flex-direction: column; align-items: center; font-size: 12px; line-height: 18px; letter-spacing: -.4px; white-space: nowrap; }
.notes { justify-self: start; margin: 8px 0 0 12px; }
.count { font: 12px "Noto Sans", sans-serif; fill: #fff; }
```
